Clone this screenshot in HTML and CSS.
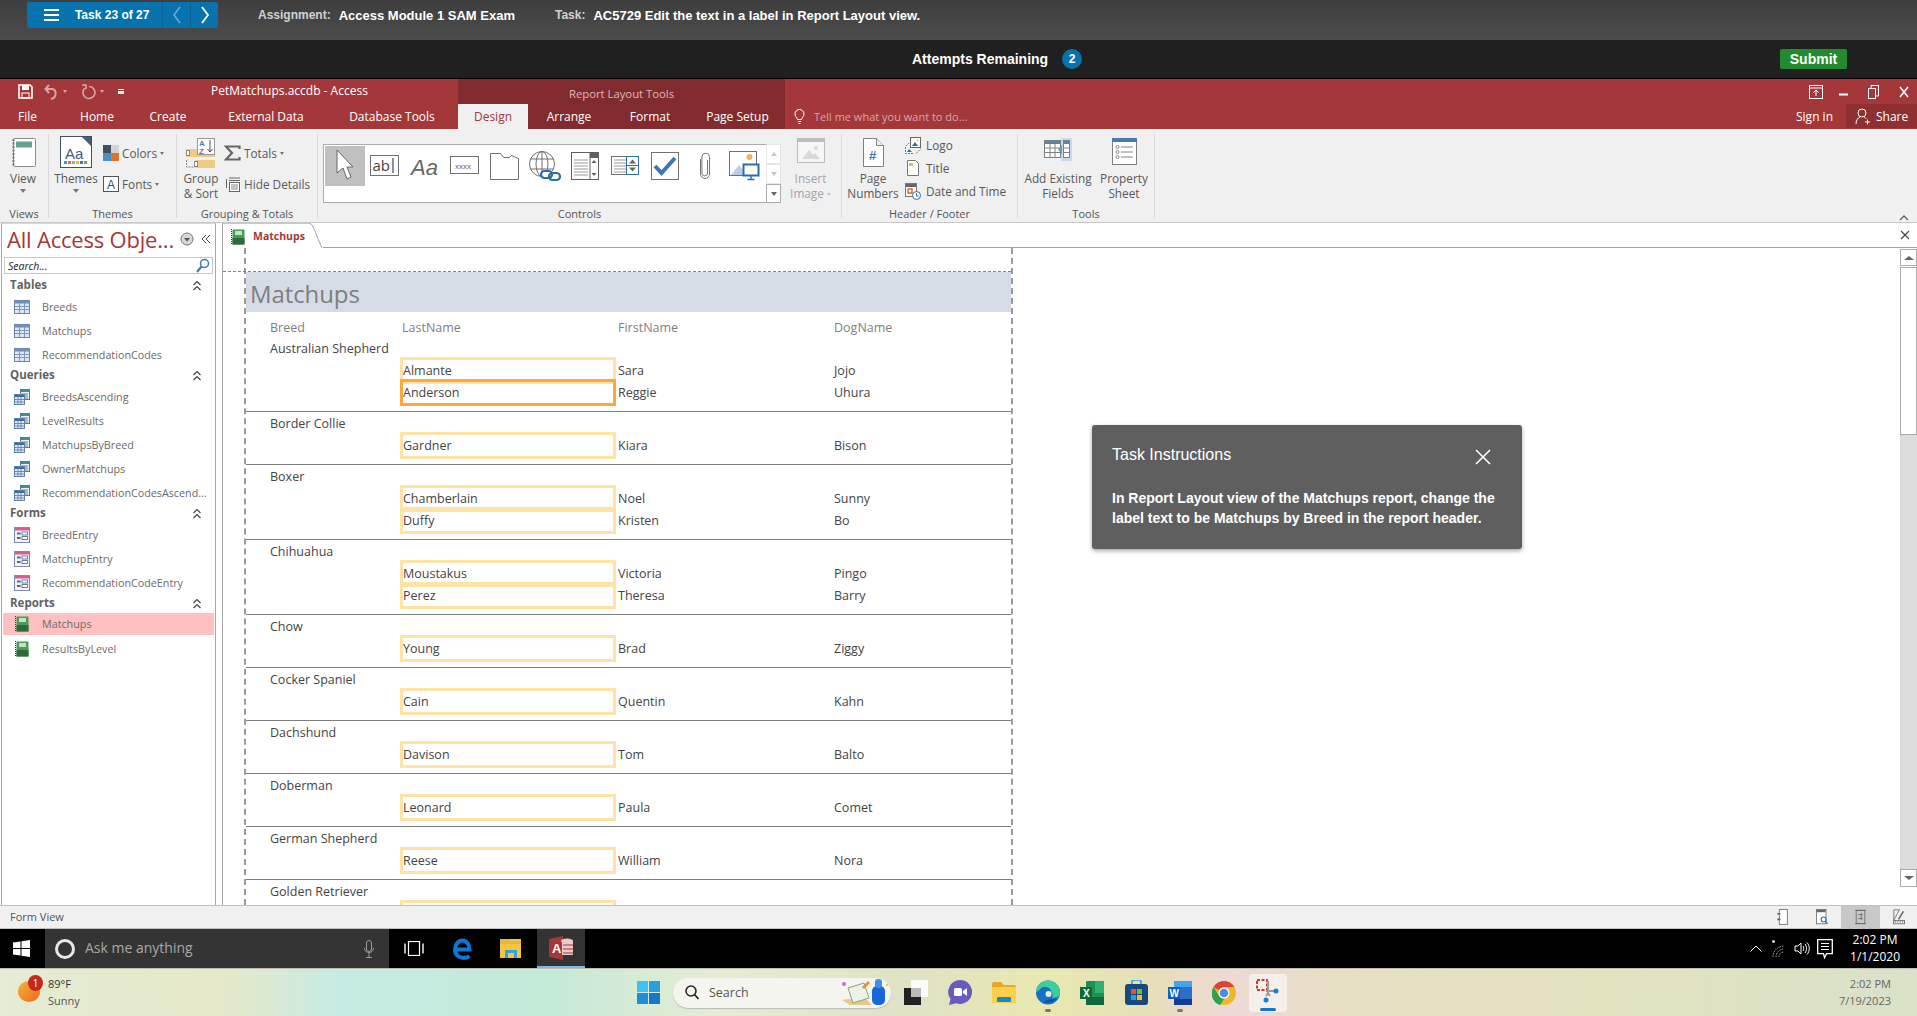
FILE: index.html
```html
<!DOCTYPE html>
<html lang="en">
<head>
<meta charset="utf-8">
<title>Access Module 1 SAM Exam</title>
<link rel="stylesheet" href="styles.css">
</head>
<body>
<svg class="defs" width="0" height="0" aria-hidden="true">
  <symbol id="i-table" viewBox="0 0 16 16"><rect x=".5" y="1.500" width="15" height="13" fill="#dbe7f6" stroke="#6e86a8"/><rect x="1" y="2" width="14" height="2.500" fill="#6f8fbd"/><path d="M1 7.500h14M1 10.500h14M5.500 4v10M10.500 4v10" stroke="#7d97bb" fill="none"/></symbol>
  <symbol id="i-query" viewBox="0 0 16 16"><rect x="6.500" y=".5" width="9" height="10" fill="#e4f0f0" stroke="#4f7f8f"/><rect x="7" y="1" width="8" height="2" fill="#3e8f94"/><path d="M8 5h6M8 7h6M8 9h6" stroke="#5f8aa0"/><rect x=".5" y="5.500" width="10" height="10" fill="#e4ecf6" stroke="#5f7fa8"/><rect x="1" y="6" width="9" height="2" fill="#3e6f94"/><path d="M1 10.500h9M1 13h9M4 8v7M7 8v7" stroke="#6a8ab0"/></symbol>
  <symbol id="i-form" viewBox="0 0 16 16"><rect x=".5" y=".5" width="15" height="15" fill="#f7f1f4" stroke="#7c8cab"/><rect x="1" y="1" width="14" height="2.500" fill="#d0608a"/><rect x="3" y="5.500" width="3.500" height="2" fill="#3c6f9f"/><rect x="3" y="10" width="3.500" height="2" fill="#3c6f9f"/><rect x="8" y="5" width="5.500" height="3" fill="#fff" stroke="#6a7f9f"/><rect x="8" y="9.500" width="5.500" height="3" fill="#fff" stroke="#6a7f9f"/></symbol>
  <symbol id="i-report" viewBox="0 0 14 16"><rect x="1.500" y=".5" width="12" height="15" fill="#4a9a5a"/><rect x="1.500" y="9" width="12" height="6.500" fill="#2d6b3a"/><rect x="4" y="2" width="7" height="4" fill="#c2e6bc"/><path d="M.5 0v16" stroke="#333" stroke-dasharray="1 1"/></symbol>
  <symbol id="i-chev" viewBox="0 0 10 12"><path d="M1.500 5 5 1.500 8.500 5M1.500 10 5 6.500 8.500 10" fill="none" stroke="#444" stroke-width="1.200"/></symbol>
</svg>

<header class="topbar">
  <div class="tasknav">
    <span class="burger"><i></i><i></i><i></i></span>
    <span class="taskcount">Task 23 of 27</span>
    <span class="tn-btn tn-prev"><svg width="10" height="18" viewBox="0 0 10 18"><path d="M8 1 2 9l6 8" fill="none" stroke="#6fa9cf" stroke-width="1.600"/></svg></span>
    <span class="tn-btn tn-next"><svg width="10" height="18" viewBox="0 0 10 18"><path d="M2 1l6 8-6 8" fill="none" stroke="#fff" stroke-width="1.800"/></svg></span>
  </div>
  <span class="meta-k k-assign">Assignment:</span><span class="meta-v v-assign">Access Module 1 SAM Exam</span>
  <span class="meta-k k-task">Task:</span><span class="meta-v">AC5729 Edit the text in a label in Report Layout view.</span>
</header>

<div class="attempts">
  <span class="att-text">Attempts Remaining</span>
  <span class="att-badge">2</span>
  <span class="submit">Submit</span>
</div>

<div class="head">
  <div class="head-left">
    <div class="qat">
      <svg class="q-save" width="15" height="15" viewBox="0 0 15 15"><path d="M1 1h11l2 2v11H1z" fill="none" stroke="#fff" stroke-width="1.600"/><rect x="4" y="1" width="7" height="5" fill="#fff"/><rect x="4" y="9" width="7" height="5" fill="none" stroke="#fff"/></svg>
      <svg class="q-undo" width="15" height="16" viewBox="0 0 15 16"><path d="M5 1 1.500 5 5 9M2 5h6c5 0 5 9-1 10" fill="none" stroke="#d9a6a8" stroke-width="2"/></svg>
      <span class="q-drop"></span>
      <svg class="q-redo" width="15" height="16" viewBox="0 0 15 16"><path d="M8 2.500a6 6 0 1 1-4 1.500M1 1h4v4" fill="none" stroke="#d9a6a8" stroke-width="1.600"/></svg>
      <span class="q-drop"></span>
      <span class="q-cust"></span>
      <span class="doc-title">PetMatchups.accdb - Access</span>
    </div>
    <nav class="tabs tabs-main">
      <span class="tab t-file">File</span><span class="tab t-home">Home</span><span class="tab t-create">Create</span><span class="tab t-ext">External Data</span><span class="tab t-db">Database Tools</span>
    </nav>
  </div>
  <div class="head-ctx">
    <div class="ctx-title">Report Layout Tools</div>
    <nav class="tabs">
      <span class="tab t-design">Design</span><span class="tab t-arr">Arrange</span><span class="tab t-fmt">Format</span><span class="tab t-ps">Page Setup</span>
    </nav>
  </div>
  <div class="head-right">
    <div class="winctl">
      <svg width="14" height="14" viewBox="0 0 14 14"><rect x=".5" y=".5" width="13" height="13" fill="none" stroke="#fff"/><path d="M1 3h12M7 11V5M4.500 7.500 7 5l2.500 2.500" fill="none" stroke="#fff"/></svg>
      <svg class="w-min" width="9" height="14" viewBox="0 0 9 14"><path d="M0 9.500h9" stroke="#fff" stroke-width="2"/></svg>
      <svg class="w-rest" width="11" height="14" viewBox="0 0 11 14"><rect x=".5" y="3.500" width="7" height="10" fill="none" stroke="#fff"/><path d="M3 3V.5h7.500V11H8" fill="none" stroke="#fff"/></svg>
      <svg class="w-x" width="10" height="12" viewBox="0 0 10 12"><path d="M1 1l8 10M9 1 1 11" stroke="#fff" stroke-width="1.600"/></svg>
    </div>
    <div class="tell-row">
      <svg class="bulb" width="11" height="15" viewBox="0 0 11 15"><path d="M3.500 10.500C3 8 1 7.500 1 5a4.500 4.500 0 0 1 9 0c0 2.500-2 3-2.500 5.500zM4 12.500h3M4.500 14.500h2" fill="none" stroke="#fff"/></svg>
      <span class="tell">Tell me what you want to do...</span>
      <span class="signin">Sign in</span>
      <span class="share"><svg width="16" height="17" viewBox="0 0 16 17"><circle cx="7" cy="5" r="4" fill="none" stroke="#fff"/><path d="M1 16c0-4 2-6 4-7M9 9c1 .5 2 1.500 2 2M10 14h5M12.500 11.500v5" fill="none" stroke="#fff"/></svg><span>Share</span></span>
    </div>
  </div>
</div>

<section class="ribbon">
  <div class="grp g-views">
    <div class="grp-body">
      <div class="big b-view">
        <div class="ico"><svg width="25" height="29" viewBox="0 0 25 29"><rect x="2.500" y=".5" width="22" height="28" rx="1" fill="#fff" stroke="#8a8a8a"/><rect x="5" y="3.500" width="16" height="6" fill="#6aa08f"/><path d="M2.500 1v27" stroke="#777" stroke-dasharray="2 1.500" stroke-width="2"/></svg></div>
        <span>View</span><span class="caret"></span>
      </div>
    </div>
    <div class="grp-label">Views</div>
  </div>

  <div class="grp g-themes">
    <div class="grp-body">
      <div class="big b-themes">
        <div class="ico"><svg width="32" height="32" viewBox="0 0 32 32"><rect x=".5" y=".5" width="31" height="31" fill="#fff" stroke="#3f4f66"/><path d="M22 1h9v9z" fill="#4a5a78"/><text x="5" y="23" class="svg-aa">Aa</text><g><rect x="4" y="25" width="3" height="3" fill="#4a90c8"/><rect x="8" y="25" width="3" height="3" fill="#e0732a"/><rect x="12" y="25" width="3" height="3" fill="#a5a5a5"/><rect x="16" y="25" width="3" height="3" fill="#f4b81c"/><rect x="20" y="25" width="3" height="3" fill="#4472c4"/><rect x="24" y="25" width="3" height="3" fill="#6fae45"/></g></svg></div>
        <span>Themes</span><span class="caret"></span>
      </div>
      <div class="smalls s-themes">
        <div class="small"><svg width="16" height="16" viewBox="0 0 16 16"><rect width="8" height="8" fill="#3f4f5f"/><rect x="8" width="8" height="8" fill="#d4d4d4"/><rect y="8" width="8" height="8" fill="#4a90c8"/><rect x="8" y="8" width="8" height="8" fill="#e0732a"/></svg><span>Colors</span><span class="caret-i"></span></div>
        <div class="small"><svg width="16" height="16" viewBox="0 0 16 16"><rect x=".5" y=".5" width="15" height="15" fill="#fff" stroke="#555"/><text x="4" y="13" class="svg-a">A</text></svg><span>Fonts</span><span class="caret-i"></span></div>
      </div>
    </div>
    <div class="grp-label">Themes</div>
  </div>

  <div class="grp g-group">
    <div class="grp-body">
      <div class="big b-group">
        <div class="ico"><svg width="30" height="30" viewBox="0 0 30 30"><rect y="11" width="29" height="8" fill="#f0c987"/><rect x="9" y="22" width="20" height="8" fill="#f0c987"/><rect x=".5" y="12.500" width="3" height="5" fill="#fff" stroke="#888"/><rect x="8.500" y="23.500" width="3" height="5" fill="#fff" stroke="#888"/><path d="M.5 22v7h7" fill="none" stroke="#888" stroke-dasharray="2 1"/><rect x="11.500" y=".5" width="17" height="16" fill="#fff" stroke="#999"/><text x="13" y="8" class="svg-az1">A</text><text x="13" y="15.500" class="svg-az2">Z</text><path d="M24 2v12M21.500 11 24 14l2.500-3" fill="none" stroke="#555"/></svg></div>
        <span>Group</span><span>&amp; Sort</span>
      </div>
      <div class="smalls s-group">
        <div class="small"><svg width="17" height="16" viewBox="0 0 17 16"><path d="M15.500 4V1.500H2L8 8l-6 6.500h13.500V12" fill="none" stroke="#666" stroke-width="2.200"/></svg><span>Totals</span><span class="caret-i"></span></div>
        <div class="small"><svg width="15" height="16" viewBox="0 0 15 16"><path d="M4 2h11M4 4.500h11M1.500 3v9" stroke="#666" fill="none"/><rect x="4.500" y="6.500" width="10" height="9" fill="#fff" stroke="#666"/><path d="M6 9h7M6 11h7M6 13h7" stroke="#888"/></svg><span>Hide Details</span></div>
      </div>
    </div>
    <div class="grp-label">Grouping &amp; Totals</div>
  </div>

  <div class="grp g-controls">
    <div class="grp-body">
      <div class="gallery">
        <div class="gal-items">
          <span class="gal-cell sel"><svg width="18" height="34" viewBox="0 0 18 34"><path d="M1 1v23l6-5 4 11 4-2-4-10h6z" fill="#fff" stroke="#666"/></svg></span>
          <span class="gal-cell"><svg width="30" height="22" viewBox="0 0 30 22"><rect x=".5" y=".5" width="28" height="20" fill="#fff" stroke="#707070"/><text x="2.500" y="16" class="svg-ab">ab</text><path d="M23 3v15" stroke="#222"/></svg></span>
          <span class="gal-cell"><svg width="34" height="26" viewBox="0 0 34 26"><text x="3" y="22" class="svg-big-a">Aa</text></svg></span>
          <span class="gal-cell"><svg width="30" height="20" viewBox="0 0 30 20"><rect x=".5" y=".5" width="28" height="17" fill="#fff" stroke="#707070"/><text x="5" y="12.500" class="svg-x">xxxx</text></svg></span>
          <span class="gal-cell"><svg width="30" height="27" viewBox="0 0 30 27"><path d="M.5 26.500V.5h10l3 4h6l2-2 7 3v21z" fill="#fff" stroke="#707070"/></svg></span>
          <span class="gal-cell"><svg width="34" height="32" viewBox="0 0 34 32"><circle cx="14" cy="14" r="12.500" fill="#fff" stroke="#707070"/><ellipse cx="14" cy="14" rx="6" ry="12.500" fill="none" stroke="#707070"/><path d="M2 9h24M2 19h24M14 1v26" stroke="#707070"/><rect x="13" y="21" width="11" height="7" rx="3.500" fill="#fff" stroke="#2b6da8" stroke-width="2.200"/><rect x="21" y="23" width="11" height="7" rx="3.500" fill="none" stroke="#2b6da8" stroke-width="2.200"/></svg></span>
          <span class="gal-cell"><svg width="28" height="28" viewBox="0 0 28 28"><rect x=".5" y=".5" width="27" height="27" fill="#fff" stroke="#606060"/><rect x="19" y="1" width="8" height="5" fill="#606060"/><path d="M3 8h14M3 11h14M3 14h14M3 17h14M3 20h14M3 23h14" stroke="#999"/><path d="M19 1v26" stroke="#606060"/><path d="M20.500 11h5L23 8zM20.500 21h5L23 24z" fill="#606060"/></svg></span>
          <span class="gal-cell"><svg width="28" height="20" viewBox="0 0 28 20"><rect x=".5" y=".5" width="27" height="18" fill="#fff" stroke="#707070"/><path d="M3 4h12M3 7h12M3 10h12M3 13h12M3 16h12" stroke="#999"/><rect x="15.500" y=".5" width="12" height="18" fill="#fff" stroke="#2b6da8"/><path d="M15.500 9.500h12" stroke="#2b6da8"/><path d="M18 7.500h7L21.500 3.500zM18 11.500h7l-3.500 4z" fill="#666"/></svg></span>
          <span class="gal-cell"><svg width="28" height="28" viewBox="0 0 28 28"><rect x=".5" y=".5" width="27" height="27" fill="#fff" stroke="#707070"/><path d="M4 14l6.500 7L24 6" fill="none" stroke="#3d78b4" stroke-width="4"/></svg></span>
          <span class="gal-cell"><svg width="12" height="28" viewBox="0 0 12 28"><path d="M8.500 8v13a2.800 2.800 0 0 1-5.600 0V5a3.800 3.800 0 0 1 7.600 0v17a4.500 4.500 0 0 1-9 0V7" fill="none" stroke="#777"/></svg></span>
          <span class="gal-cell"><svg width="32" height="30" viewBox="0 0 32 30"><rect x=".5" y=".5" width="27" height="24" fill="#fff" stroke="#707070"/><circle cx="20.500" cy="6" r="3" fill="#eeb55e"/><path d="M2 24l8-10 8 10z" fill="#b9cfe8"/><rect x="14.500" y="13.500" width="15" height="11" fill="#fff" stroke="#2b6da8" stroke-width="2"/><path d="M22 25v3M18.500 28.500h7" stroke="#2b6da8" stroke-width="1.400"/></svg></span>
        </div>
        <div class="gal-scroll">
          <span class="gs-btn"><i class="tri-up"></i></span>
          <span class="gs-btn"><i class="tri-down"></i></span>
          <span class="gs-btn gs-more"><i class="tri-more"></i></span>
        </div>
      </div>
      <div class="big dis b-insert">
        <div class="ico"><svg width="28" height="25" viewBox="0 0 28 25"><rect x=".5" y=".5" width="27" height="24" fill="#f6f6f6" stroke="#bdbdbd"/><rect width="28" height="4" fill="#bdbdbd"/><circle cx="19" cy="10" r="2" fill="#d9d9d9"/><path d="M5 21l7-9 4 5 2-2 5 6z" fill="#d9d9d9"/></svg></div>
        <span>Insert</span><span>Image<i class="caret-i dim"></i></span>
      </div>
    </div>
    <div class="grp-label">Controls</div>
  </div>

  <div class="grp g-header">
    <div class="grp-body">
      <div class="big b-page">
        <div class="ico"><svg width="21" height="29" viewBox="0 0 21 29"><path d="M.5.5h13l7 7v21H.5z" fill="#fff" stroke="#808080"/><path d="M13.500.5v7h7" fill="#eee" stroke="#808080"/><text x="6" y="22" class="svg-hash">#</text></svg></div>
        <span>Page</span><span>Numbers</span>
      </div>
      <div class="smalls s-header">
        <div class="small"><svg width="16" height="17" viewBox="0 0 16 17"><path d="M.5 10v6.500h8M11 16.500l5-5M1 9l3-3" fill="none" stroke="#777" stroke-dasharray="2 1"/><rect x="5.500" y=".5" width="10" height="10" fill="#fff" stroke="#666"/><path d="M7 9l3-4 3 4z" fill="#2b6da8"/><circle cx="12.500" cy="3.500" r="1" fill="#eeb55e"/><path d="M2 15l2-3 3 3z" fill="#2b6da8"/></svg><span>Logo</span></div>
        <div class="small"><svg width="12" height="16" viewBox="0 0 12 16"><path d="M.5.5h8l3 3v12H.5z" fill="#fff" stroke="#777"/><rect x="2" y="3" width="4" height="3" fill="#eeb55e"/></svg><span>Title</span></div>
        <div class="small"><svg width="16" height="17" viewBox="0 0 16 17"><rect x=".5" y=".5" width="11" height="13" fill="#fff" stroke="#777"/><rect x="1" y="1" width="10" height="3" fill="#666"/><rect x="3" y="6" width="4" height="4" fill="none" stroke="#d9622a" stroke-width="1.400"/><circle cx="11.500" cy="12.500" r="4" fill="#fff" stroke="#2b6da8"/><path d="M11.500 10v3h2" fill="none" stroke="#2b6da8"/></svg><span>Date and Time</span></div>
      </div>
    </div>
    <div class="grp-label">Header / Footer</div>
  </div>

  <div class="grp g-tools">
    <div class="grp-body">
      <div class="big b-add">
        <div class="ico"><svg width="29" height="23" viewBox="0 0 29 23"><rect x=".5" y="2.500" width="16" height="17" fill="#fff" stroke="#808080"/><rect x="1" y="3" width="15" height="3" fill="#5c82b0"/><path d="M1 10h15M1 14.500h15M6 6v13M11 6v13" stroke="#808080"/><rect x="17" y="0" width="11" height="23" fill="#c9d9ea"/><rect x="19.500" y="2.500" width="6" height="17" fill="#fff" stroke="#808080"/><rect x="20" y="3" width="5" height="3" fill="#5c82b0"/><path d="M20 10h5M20 14.500h5" stroke="#808080"/><path d="M18 7v9l-4-4.500z" fill="#6aa08f"/></svg></div>
        <span>Add Existing</span><span>Fields</span>
      </div>
      <div class="big b-prop">
        <div class="ico"><svg width="25" height="27" viewBox="0 0 25 27"><rect x=".5" y=".5" width="24" height="26" fill="#fff" stroke="#808080"/><rect width="25" height="4" fill="#4a7ab5"/><path d="M9 9h12M9 14h12M9 19h12" stroke="#808080"/><circle cx="5.500" cy="9" r="1.500" fill="none" stroke="#808080"/><circle cx="5.500" cy="14" r="1.500" fill="none" stroke="#808080"/><circle cx="5.500" cy="19" r="1.500" fill="none" stroke="#808080"/></svg></div>
        <span>Property</span><span>Sheet</span>
      </div>
    </div>
    <div class="grp-label">Tools</div>
  </div>

  <div class="rb-fill"><svg width="10" height="7" viewBox="0 0 10 7"><path d="M1 6l4-4 4 4" fill="none" stroke="#666" stroke-width="1.400"/></svg></div>
</section>

<main class="work">
  <aside class="navpane">
    <div class="nav-head">
      <span class="nav-title">All Access Obje...</span>
      <svg class="nav-drop" width="14" height="14" viewBox="0 0 14 14"><circle cx="7" cy="7" r="6" fill="#d8d8d8" stroke="#777"/><path d="M4 6h6L7 9.500z" fill="#555"/></svg>
      <svg class="nav-coll" width="10" height="10" viewBox="0 0 10 10"><path d="M5 1 1 5l4 4M9 1 5 5l4 4" fill="none" stroke="#444"/></svg>
    </div>
    <div class="nav-search"><span>Search...</span><svg width="14" height="15" viewBox="0 0 14 15"><circle cx="8.500" cy="5.500" r="4" fill="#fff" stroke="#3f78b0" stroke-width="1.500"/><path d="M5.500 8.500 1 14" stroke="#3f78b0" stroke-width="2"/></svg></div>

    <div class="nav-sec"><span>Tables</span><svg width="10" height="12"><use href="#i-chev"/></svg></div>
    <div class="nav-item"><svg class="ni" width="16" height="16"><use href="#i-table"/></svg><span>Breeds</span></div>
    <div class="nav-item"><svg class="ni" width="16" height="16"><use href="#i-table"/></svg><span>Matchups</span></div>
    <div class="nav-item"><svg class="ni" width="16" height="16"><use href="#i-table"/></svg><span>RecommendationCodes</span></div>

    <div class="nav-sec"><span>Queries</span><svg width="10" height="12"><use href="#i-chev"/></svg></div>
    <div class="nav-item"><svg class="ni" width="16" height="16"><use href="#i-query"/></svg><span>BreedsAscending</span></div>
    <div class="nav-item"><svg class="ni" width="16" height="16"><use href="#i-query"/></svg><span>LevelResults</span></div>
    <div class="nav-item"><svg class="ni" width="16" height="16"><use href="#i-query"/></svg><span>MatchupsByBreed</span></div>
    <div class="nav-item"><svg class="ni" width="16" height="16"><use href="#i-query"/></svg><span>OwnerMatchups</span></div>
    <div class="nav-item"><svg class="ni" width="16" height="16"><use href="#i-query"/></svg><span>RecommendationCodesAscend...</span></div>

    <div class="nav-sec"><span>Forms</span><svg width="10" height="12"><use href="#i-chev"/></svg></div>
    <div class="nav-item"><svg class="ni" width="16" height="16"><use href="#i-form"/></svg><span>BreedEntry</span></div>
    <div class="nav-item"><svg class="ni" width="16" height="16"><use href="#i-form"/></svg><span>MatchupEntry</span></div>
    <div class="nav-item"><svg class="ni" width="16" height="16"><use href="#i-form"/></svg><span>RecommendationCodeEntry</span></div>

    <div class="nav-sec"><span>Reports</span><svg width="10" height="12"><use href="#i-chev"/></svg></div>
    <div class="nav-item active"><svg class="ni" width="16" height="16"><use href="#i-report"/></svg><span>Matchups</span></div>
    <div class="nav-item"><svg class="ni" width="16" height="16"><use href="#i-report"/></svg><span>ResultsByLevel</span></div>
  </aside>

  <section class="doc">
    <div class="doc-tabs">
      <div class="doc-tab"><svg width="16" height="16"><use href="#i-report"/></svg><span>Matchups</span></div>
      <svg class="doc-slope" width="14" height="25" viewBox="0 0 14 25"><path d="M0 .5c5 0 5 8 13 24" fill="none" stroke="#a0a0a0"/></svg>
      <div class="doc-line"><svg width="10" height="10" viewBox="0 0 10 10"><path d="M1 1l8 8M9 1 1 9" stroke="#444" stroke-width="1.200"/></svg></div>
    </div>
    <div class="doc-body">
      <div class="canvas">
        <div class="report">
          <div class="rep-top"></div>
          <div class="rep-band"><span>Matchups</span></div>
          <div class="rec rep-cols"><span>Breed</span><span>LastName</span><span>FirstName</span><span>DogName</span></div>

          <div class="grpx first">
            <div class="breed">Australian Shepherd</div>
            <div class="rec"><span></span><span class="ln">Almante</span><span>Sara</span><span>Jojo</span></div>
            <div class="rec"><span></span><span class="ln cur">Anderson</span><span>Reggie</span><span>Uhura</span></div>
          </div>
          <div class="grpx">
            <div class="breed">Border Collie</div>
            <div class="rec"><span></span><span class="ln">Gardner</span><span>Kiara</span><span>Bison</span></div>
          </div>
          <div class="grpx">
            <div class="breed">Boxer</div>
            <div class="rec"><span></span><span class="ln">Chamberlain</span><span>Noel</span><span>Sunny</span></div>
            <div class="rec"><span></span><span class="ln">Duffy</span><span>Kristen</span><span>Bo</span></div>
          </div>
          <div class="grpx">
            <div class="breed">Chihuahua</div>
            <div class="rec"><span></span><span class="ln">Moustakus</span><span>Victoria</span><span>Pingo</span></div>
            <div class="rec"><span></span><span class="ln">Perez</span><span>Theresa</span><span>Barry</span></div>
          </div>
          <div class="grpx">
            <div class="breed">Chow</div>
            <div class="rec"><span></span><span class="ln">Young</span><span>Brad</span><span>Ziggy</span></div>
          </div>
          <div class="grpx">
            <div class="breed">Cocker Spaniel</div>
            <div class="rec"><span></span><span class="ln">Cain</span><span>Quentin</span><span>Kahn</span></div>
          </div>
          <div class="grpx">
            <div class="breed">Dachshund</div>
            <div class="rec"><span></span><span class="ln">Davison</span><span>Tom</span><span>Balto</span></div>
          </div>
          <div class="grpx">
            <div class="breed">Doberman</div>
            <div class="rec"><span></span><span class="ln">Leonard</span><span>Paula</span><span>Comet</span></div>
          </div>
          <div class="grpx">
            <div class="breed">German Shepherd</div>
            <div class="rec"><span></span><span class="ln">Reese</span><span>William</span><span>Nora</span></div>
          </div>
          <div class="grpx">
            <div class="breed">Golden Retriever</div>
            <div class="rec"><span></span><span class="ln"></span><span></span><span></span></div>
          </div>
        </div>
      </div>
      <div class="vscroll">
        <span class="vs-btn"><i class="tri-up dark"></i></span>
        <span class="vs-thumb"></span>
        <span class="vs-track"></span>
        <span class="vs-btn down"><i class="tri-down dark"></i></span>
        <span class="vs-end"></span>
      </div>
    </div>
  </section>
</main>

<footer class="status">
  <span>Form View</span>
  <div class="views">
    <span class="vw"><svg width="11" height="16" viewBox="0 0 13 20"><rect x="2.500" y=".5" width="10" height="19" fill="#fff" stroke="#666"/><path d="M0 6h4M0 13h4" stroke="#666" stroke-width="2"/></svg></span>
    <span class="vw"><svg width="12" height="16" viewBox="0 0 15 20"><rect x=".5" y=".5" width="12" height="18" fill="#fff" stroke="#666"/><rect x="1" y="1" width="11" height="3" fill="#666"/><circle cx="9.500" cy="13" r="3" fill="#fff" stroke="#2b6da8" stroke-width="1.400"/><path d="M12 15.500l2.500 3" stroke="#2b6da8" stroke-width="1.400"/></svg></span>
    <span class="vw on"><svg width="11" height="16" viewBox="0 0 14 20"><rect x="1.500" y="1.500" width="11" height="17" fill="none" stroke="#666"/><path d="M0 1.500h14M0 18.500h14M4 7h6M4 12h6M8 5v9" stroke="#666"/></svg></span>
    <span class="vw last"><svg width="12" height="16" viewBox="0 0 15 20"><path d="M1 1v13l7-13z" fill="none" stroke="#666"/><path d="M7 13l6-10" stroke="#666" stroke-width="2"/><rect x=".5" y="14.500" width="14" height="4" fill="none" stroke="#666"/><path d="M3 15v2M6 15v2M9 15v2M12 15v2" stroke="#666"/></svg></span>
  </div>
</footer>

<div class="win10">
  <span class="w10-start"><svg width="17" height="17" viewBox="0 0 17 17"><path d="M0 2.500 7.500 1.400v6.600H0zM8.500 1.300 17 0v8H8.500zM0 9h7.500v6.600L0 14.500zM8.500 9H17v8l-8.500-1.300z" fill="#fff"/></svg></span>
  <div class="w10-search">
    <span class="ring"></span>
    <span class="ask">Ask me anything</span>
    <svg width="10" height="18" viewBox="0 0 10 18"><rect x="2.500" y=".5" width="5" height="11" rx="2.500" fill="none" stroke="#999"/><path d="M.5 8c0 6 9 6 9 0M5 13v4M2 17.500h6" fill="none" stroke="#999"/></svg>
  </div>
  <span class="w10-app a-view"><svg width="20" height="15" viewBox="0 0 20 15"><rect x="4.500" y=".5" width="11" height="14" fill="none" stroke="#fff" stroke-width="1.200"/><path d="M1 2.500v10M19 2.500v10" stroke="#fff" stroke-width="1.400"/></svg></span>
  <span class="w10-app a-edge"><svg width="20" height="22" viewBox="0 0 20 22"><path d="M3.500 11.500h13c0-5-3-9-7-9S2 6.500 2 11.500 6 20 10.500 20c2.500 0 4.500-.7 6-1.800" fill="none" stroke="#0a78d7" stroke-width="4"/></svg></span>
  <span class="w10-app a-files"><svg width="22" height="19" viewBox="0 0 22 19"><path d="M0 0h21v19H0z" fill="#f4c542"/><path d="M0 0h9l2 2h10v3H0z" fill="#e8b83a"/><path d="M5 19v-8h12v8z" fill="#2ea3dc"/><rect x="8" y="14" width="6" height="5" fill="#f4c542"/></svg></span>
  <span class="w10-app a-access"><svg width="24" height="24" viewBox="0 0 24 24"><path d="M0 3 14 0v24L0 21z" fill="#a4373a"/><ellipse cx="18" cy="5" rx="6" ry="2.500" fill="#e9c9ca"/><path d="M13 5h11v14H13z" fill="#e9c9ca"/><path d="M14 9h10M14 13h10M14 17h10" stroke="#a4373a"/><text x="3" y="17" class="svg-acc">A</text></svg></span>
  <div class="tray">
    <svg width="12" height="7" viewBox="0 0 12 7"><path d="M.5 6.500 6 1l5.500 5.500" fill="none" stroke="#fff"/></svg>
    <svg class="tray-net" width="14" height="19" viewBox="0 0 14 19"><path d="M2 18a11 11 0 0 1 11-11M5 18a8 8 0 0 1 8-8M8 18a5 5 0 0 1 5-5" fill="none" stroke="#aaa" stroke-dasharray="1.500 1"/><path d="M1 2.500h3M2.500 1v3M1.300 1.300l2.400 2.400M3.700 1.300 1.300 3.700" stroke="#fff" stroke-width=".7"/></svg>
    <svg width="16" height="15" viewBox="0 0 16 15"><path d="M1 5h3l3-3v11l-3-3H1z" fill="none" stroke="#fff"/><path d="M9 5c1 1.500 1 3.500 0 5M11 3c2 2.500 2 6.500 0 9M13 1.500c3 3.500 3 8.500 0 12" fill="none" stroke="#fff"/></svg>
    <svg width="16" height="20" viewBox="0 0 16 20"><path d="M.7.7h14.600v14H9.500l-2 4-1-4H.7z" fill="none" stroke="#fff" stroke-width="1.300"/><path d="M4 4.500h8M4 7.500h8M4 10.500h8" stroke="#fff"/></svg>
    <div class="clock"><span>2:02 PM</span><span>1/1/2020</span></div>
  </div>
</div>

<div class="win11">
  <div class="weather">
    <span class="sun"><span class="sun-badge">1</span></span>
    <div class="wtext"><span>89°F</span><span class="dim-t">Sunny</span></div>
  </div>
  <div class="w11-center">
    <svg class="w11-logo" width="23" height="23" viewBox="0 0 23 23"><rect width="11" height="11" fill="#40c0f0"/><rect x="12" width="11" height="11" fill="#2a9fe0"/><rect y="12" width="11" height="11" fill="#1f8fd8"/><rect x="12" y="12" width="11" height="11" fill="#1478c8"/></svg>
    <div class="w11-search">
      <svg width="14" height="15" viewBox="0 0 14 15"><circle cx="6" cy="6" r="5" fill="none" stroke="#222" stroke-width="1.500"/><path d="M9.500 9.500 13.500 14" stroke="#222" stroke-width="1.700"/></svg>
      <span>Search</span>
      <svg class="doodle" width="48" height="28" viewBox="0 0 48 28"><path d="M2 21l22-3 8 8H10z" fill="#e6c98a"/><path d="M8 9l16-5 5 15-16 5z" fill="#eef2e6" stroke="#8aa37a"/><path d="M22 8l6-6 2 2-6 6z" fill="#f08a3c"/><rect x="32" y="7" width="13" height="19" rx="5" fill="#1668d8"/><rect x="35" y="0" width="7" height="9" rx="3" fill="#3f8fef"/><circle cx="4" cy="5" r="2" fill="#d060e0"/><circle cx="47" cy="6" r="1" fill="#f0b030"/></svg>
    </div>
    <span class="ti t-task"><svg width="24" height="25" viewBox="0 0 24 25"><rect x="7" y="0" width="17" height="17" fill="#fff" opacity=".9"/><rect y="8" width="17" height="17" fill="#222"/><rect x="7" y="8" width="10" height="9" fill="#bbb"/></svg></span>
    <span class="ti t-chat"><svg width="24" height="25" viewBox="0 0 24 25"><path d="M12 0a12 12 0 1 1-4 23.300L1 25l1.500-6A12 12 0 0 1 12 0z" fill="#6a5ac0"/><rect x="6" y="8" width="8" height="8" rx="1.500" fill="#fff"/><path d="M15 11l4-3v8l-4-3z" fill="#fff"/></svg></span>
    <span class="ti t-folder"><svg width="24" height="21" viewBox="0 0 24 21"><path d="M0 2a2 2 0 0 1 2-2h7l3 3h10a2 2 0 0 1 2 2v16H0z" fill="#e8a825"/><path d="M0 5h24v16H0z" fill="#fad04a"/><rect x="5" y="15" width="14" height="5" rx="1" fill="#1a86d0"/></svg></span>
    <span class="ti t-edge dot"><svg width="24" height="25" viewBox="0 0 24 25"><circle cx="12" cy="12.500" r="12" fill="#1670c8"/><path d="M12 .5a12 12 0 0 1 12 12c0 3-2 5-5 5h-3.500c1.500-1 1.500-3.500 0-5A6.500 6.500 0 0 0 3.500 10 12 12 0 0 0 0 12.500 12 12 0 0 1 12 .5z" fill="#3ccf9e"/><circle cx="12.500" cy="14" r="3" fill="#e8eed0"/><path d="M8 22c3 1 8 1 12-3-3 0-8 0-12 3z" fill="#0d4f9e"/></svg></span>
    <span class="ti t-xl"><svg width="24" height="24" viewBox="0 0 24 24"><rect x="6" width="18" height="24" rx="1" fill="#1f8f58"/><rect x="15" width="9" height="12" fill="#2fb070"/><rect x="6" y="16" width="18" height="8" fill="#106a3c"/><rect y="6" width="12" height="12" fill="#0f6a3a"/><text x="3" y="16" class="svg-xl">X</text></svg></span>
    <span class="ti t-store"><svg width="23" height="25" viewBox="0 0 23 25"><path d="M7 5V2a2 2 0 0 1 2-2h5a2 2 0 0 1 2 2v3" fill="none" stroke="#30a0e0" stroke-width="1.600"/><rect y="4" width="23" height="21" rx="3" fill="#17497f"/><rect x="6" y="9" width="5" height="5" fill="#e8532a"/><rect x="12" y="9" width="5" height="5" fill="#6dbf3c"/><rect x="6" y="15" width="5" height="5" fill="#20a0e8"/><rect x="12" y="15" width="5" height="5" fill="#f8bc1c"/></svg></span>
    <span class="ti t-word dot"><svg width="24" height="24" viewBox="0 0 24 24"><rect x="6" width="18" height="24" rx="1" fill="#2a6fc8"/><rect x="6" width="18" height="6" fill="#41a5ee"/><rect x="6" y="18" width="18" height="6" fill="#103f91"/><rect y="6" width="12" height="12" fill="#185abd"/><text x="1.500" y="16" class="svg-xl">W</text></svg></span>
    <span class="ti t-chrome"><svg width="24" height="24" viewBox="0 0 24 24"><circle cx="12" cy="12" r="12" fill="#e9b92c"/><path d="M12 0a12 12 0 0 1 10.400 6H12a6 6 0 0 0-5.200 3L1.600 6A12 12 0 0 1 12 0z" fill="#dc4437"/><path d="M1.600 6 7 15a6 6 0 0 0 5 3l-4 6A12 12 0 0 1 1.600 6z" fill="#2ea24c"/><circle cx="12" cy="12" r="5.500" fill="#fff"/><circle cx="12" cy="12" r="4.300" fill="#4a8bf0"/></svg></span>
    <span class="ti t-snip"><svg width="24" height="28" viewBox="0 0 24 28"><rect x="1" y="1" width="10" height="10" fill="none" stroke="#d0392a" stroke-width="2" stroke-dasharray="3 1.500"/><path d="M12 2v12l-2 3M12 14l2 3M10 12h12" stroke="#999" stroke-width="2" fill="none"/><circle cx="20" cy="12" r="2.500" fill="#1080d8"/><circle cx="10" cy="21" r="2.500" fill="#1080d8"/></svg></span>
  </div>
  <div class="w11-clock"><span>2:02 PM</span><span>7/19/2023</span></div>
</div>

<aside class="instructions">
  <div class="ins-head"><span>Task Instructions</span><svg width="16" height="16" viewBox="0 0 16 16"><path d="M1 1l14 14M15 1 1 15" stroke="#fff" stroke-width="1.600"/></svg></div>
  <p>In Report Layout view of the Matchups report, change the label text to be Matchups by Breed in the report header.</p>
</aside>
</body>
</html>
```
FILE: styles.css
```css
* { box-sizing: border-box; }
html, body { margin: 0; padding: 0; }
body {
  width: 1917px; height: 1016px; overflow: hidden; position: relative;
  display: flex; flex-direction: column;
  font-family: "Open Sans", "Noto Sans", sans-serif; font-size: 12px; color: #444; background: #fff;
}
.defs { position: absolute; }
svg { display: block; flex: none; }
i { font-style: normal; }

/* SAM top bars */
.topbar {
  height: 40px; display: flex; align-items: center; padding-left: 27px;
  background: linear-gradient(#3e3e3e, #4c4c4c);
  font-family: "Liberation Sans", Arial, sans-serif; font-weight: 700; font-size: 13px; color: #fff;
}
.tasknav {
  width: 191px; height: 26px; margin-top: -10px; display: flex; align-items: center;
  background: #0672ae; border-radius: 2px; font-size: 12px;
}
.burger { width: 15px; margin-left: 17px; display: flex; flex-direction: column; gap: 3px; }
.burger i { height: 2px; background: #fff; }
.taskcount { margin-left: 16px; width: 88px; }
.tn-btn { width: 28px; height: 26px; display: flex; align-items: center; justify-content: center; border-left: 1px solid #0a6396; }
.meta-k { color: #cfd2d4; margin-top: -10px; font-size: 12px; }
.meta-v { margin-top: -10px; }
.k-assign { margin-left: 40px; }
.v-assign { margin-left: 8px; }
.k-task { margin-left: 40px; }
.k-task + .meta-v { margin-left: 8px; }

.attempts {
  height: 39px; display: flex; align-items: center; position: relative;
  background: #202020; border-bottom: 1px solid #000;
  font-family: "Liberation Sans", Arial, sans-serif; font-weight: 700; color: #fff; font-size: 14px;
  padding-left: 912px;
}
.att-text { width: 150px; }
.att-badge { width: 20px; height: 20px; border-radius: 50%; background: #0672ae; display: flex; align-items: center; justify-content: center; font-size: 12px; }
.submit { margin-left: 698px; width: 67px; height: 20px; background: #228b2e; border-radius: 2px; display: flex; align-items: center; justify-content: center; font-size: 14px; }

/* Access title + tabs */
.head { height: 50px; display: flex; background: #a4373a; color: #fff; }
.head-left { width: 458px; }
.head-ctx { width: 327px; background: #812b2e; }
.head-right { flex: 1; }
.qat { height: 25px; display: flex; align-items: center; padding-left: 18px; }
.q-undo { margin-left: 11px; }
.q-redo { margin-left: 14px; }
.q-drop { margin-left: 4px; width: 0; height: 0; border: 2.5px solid transparent; border-top: 3px solid #d9a6a8; border-bottom: 0; }
.q-cust { margin-left: 14px; width: 6px; height: 5px; border-top: 1px solid #fff; border-bottom: 3px solid #fff; }
.doc-title { margin-left: 87px; margin-top: -2px; font-size: 12px; }
.tabs { height: 25px; display: flex; }
.tabs-main { padding-right: 9px; }
.tab { display: flex; align-items: center; justify-content: center; font-size: 12px; padding-bottom: 1px; }
.t-file { width: 55px; } .t-home { width: 84px; } .t-create { width: 58px; } .t-ext { width: 138px; } .t-db { width: 114px; }
.t-design { width: 70px; background: #f0f0f0; color: #a4373a; }
.t-arr { width: 82px; } .t-fmt { width: 80px; } .t-ps { width: 95px; }
.ctx-title { height: 25px; padding-top: 7px; line-height: 16px; text-align: center; color: #dcb8b9; font-size: 11.3px; }
.winctl { height: 25px; display: flex; align-items: center; padding-left: 1024px; }
.w-min { margin-left: 16px; }
.w-rest { margin-left: 20px; }
.w-x { margin-left: 20px; }
.tell-row { height: 25px; display: flex; align-items: center; padding-left: 9px; }
.tell { margin-left: 9px; width: 982px; color: #d7a5a7; font-size: 11px; }
.signin { width: 50px; font-size: 12px; }
.share { width: 71px; height: 24px; margin-bottom: 1px; background: #8e2f32; display: flex; align-items: center; gap: 5px; padding-left: 9px; font-size: 12px; }

/* Ribbon */
.ribbon { height: 94px; display: flex; padding-top: 5px; background: #f0f0f0; border-bottom: 1px solid #c8c8c8; }
.grp { height: 84px; display: flex; flex-direction: column; border-right: 1px solid #d9d9d9; flex: none; }
.g-views { width: 49px; } .g-themes { width: 128px; } .g-group { width: 141px; }
.g-controls { width: 524px; } .g-header { width: 176px; } .g-tools { width: 137px; }
.grp-body { height: 73px; display: flex; }
.grp-label { height: 11px; line-height: 14px; text-align: center; font-size: 11px; color: #555; white-space: nowrap; }
.rb-fill { flex: 1; height: 88px; display: flex; align-items: flex-end; justify-content: flex-end; padding: 0 8px 1px 0; }
.big { display: flex; flex-direction: column; align-items: center; line-height: 15px; color: #595959; font-size: 11.8px; white-space: nowrap; }
.big .ico { height: 37px; width: 100%; padding-top: 4px; display: flex; justify-content: center; }
.big.dis { color: #a3a3ad; }
.caret { width: 0; height: 0; margin-top: 3px; border: 3px solid transparent; border-top: 4px solid #777; border-bottom: 0; }
.caret-i { display: inline-block; width: 0; height: 0; margin-left: 3px; border: 2.5px solid transparent; border-top: 3px solid #777; border-bottom: 0; vertical-align: 2px; }
.caret-i.dim { border-top-color: #c0c0c0; }
.b-view { width: 46px; }
.b-themes { width: 46px; margin-left: 4px; }
.b-themes .ico { padding-top: 2px; }
.b-group { width: 40px; margin-left: 4px; }
.b-insert { width: 59px; }
.b-page { width: 58px; margin-left: 2px; }
.b-add { width: 76px; margin-left: 2px; }
.b-prop { width: 48px; margin-left: 4px; }
.smalls { display: flex; flex-direction: column; }
.small { height: 20px; display: flex; align-items: center; color: #595959; font-size: 11.8px; white-space: nowrap; }
.s-themes { margin: 9px 0 0 4px; gap: 11px; }
.s-themes .small span:first-of-type { margin-left: 3px; }
.s-group { margin: 9px 0 0 3px; gap: 11px; }
.s-group .small svg { width: 17px; }
.s-group .small span:first-of-type { margin-left: 3px; }
.s-header { margin: 1px 0 0 3px; gap: 3px; }
.s-header .small svg { margin-right: 5px; }
.s-header .small:nth-child(2) svg { margin: 0 7px 0 2px; }

.gallery { width: 458px; height: 59px; margin: 10px 0 0 5px; display: flex; background: #fff; border: 1px solid #ababab; }
.gal-items { flex: 1; display: flex; padding: 1px 0 0 1px; }
.gal-cell { width: 40px; height: 40px; display: flex; align-items: center; justify-content: center; }
.gal-cell.sel { background: #c0c0c0; }
.gal-scroll { width: 15px; display: flex; flex-direction: column; margin: -1px -1px -1px 0; }
.gs-btn { height: 20px; display: flex; align-items: center; justify-content: center; background: #fff; border: 1px solid #e6e6e6; }
.gs-more { border-color: #ababab; flex: 1; }
.tri-up, .tri-down, .tri-more { width: 0; height: 0; border: 3.5px solid transparent; }
.tri-up { border-top: 0; border-bottom: 4px solid #c6c6c6; }
.tri-down { border-bottom: 0; border-top: 4px solid #c6c6c6; }
.tri-more { border-bottom: 0; border-top: 4px solid #666; box-shadow: 0 -3px 0 -2px #666; }
.tri-up.dark { border-bottom-color: #666; border-left-width: 5px; border-right-width: 5px; }
.tri-down.dark { border-top-color: #666; border-left-width: 5px; border-right-width: 5px; }

/* svg text */
.svg-aa { font: 15px "Liberation Sans", sans-serif; fill: #3d5a80; }
.svg-a { font: 12px "Liberation Sans", sans-serif; fill: #2b4b80; }
.svg-az1 { font: bold 8px "Liberation Sans", sans-serif; fill: #3b7fc4; }
.svg-az2 { font: bold 8px "Liberation Sans", sans-serif; fill: #8a5fb0; }
.svg-ab { font: 15px "Open Sans", sans-serif; fill: #444; }
.svg-big-a { font: italic 22px "Liberation Sans", sans-serif; fill: #666; }
.svg-x { font: 8px "Liberation Sans", sans-serif; fill: #666; }
.svg-hash { font: bold 13px "Liberation Sans", sans-serif; fill: #3d78b4; }
.svg-acc { font: bold 13px "Liberation Sans", sans-serif; fill: #fff; }
.svg-xl { font: bold 10px "Liberation Sans", sans-serif; fill: #fff; }

/* Work area */
.work { height: 682px; display: flex; overflow: hidden; }
.navpane { width: 215px; margin-left: 1px; border-left: 1px solid #a8a8a8; border-right: 1px solid #a8a8a8; border-top: 1px solid #d8d8d8; flex: none; }
.nav-head { height: 33px; display: flex; align-items: center; padding: 0 0 4px 5px; }
.nav-title { width: 173px; font-size: 22px; line-height: 30px; color: #a4373a; white-space: nowrap; letter-spacing: -.2px; }
.nav-coll { margin-left: 7px; }
.nav-search { height: 17px; margin: 0 2px 0 2px; display: flex; align-items: center; border: 1px solid #c8c8c8; font-style: italic; font-size: 10.5px; color: #222; padding-left: 3px; }
.nav-search span { flex: 1; }
.nav-search svg { margin-right: 2px; }
.nav-sec { height: 18px; line-height: 17px; display: flex; justify-content: space-between; align-items: flex-start; padding: 0 13px 0 8px; font-weight: 700; font-size: 11.5px; color: #626262; }
.nav-sec svg { margin-top: 4px; }
.nav-search + .nav-sec { margin-top: 2px; }
.nav-item { height: 24px; display: flex; align-items: center; padding: 2px 0 0 12px; font-size: 10.75px; color: #6a6a6a; white-space: nowrap; }
.nav-item span { margin-left: 12px; }
.nav-item.active { height: 22px; margin: 1px 1px 1px 1px; padding: 0 0 0 11px; background: #ffc0c2; }

.doc { flex: 1; margin-left: 6px; border-left: 1px solid #a8a8a8; display: flex; flex-direction: column; min-width: 0; }
.doc-tabs { height: 25px; display: flex; flex: none; }
.doc-tab { width: 86px; display: flex; align-items: flex-start; padding: 5px 0 0 7px; gap: 7px; border-top: 1px solid #c8c8c8; font-size: 10.5px; font-weight: 700; color: #a4373a; }
.doc-tab span { line-height: 15px; }
.doc-line { flex: 1; border-bottom: 1px solid #a0a0a0; display: flex; justify-content: flex-end; align-items: center; padding: 0 7px 0 0; }
.doc-body { flex: 1; display: flex; min-height: 0; }
.canvas { flex: 1; overflow: hidden; padding-left: 21px; }
.report { width: 769px; height: 100%; border-left: 2px dashed #9a9a9a; border-right: 2px dashed #9a9a9a; font-size: 12.5px; color: #444; }
.rep-top { height: 24px; margin-left: -23px; border-bottom: 1px dashed #808080; }
.rep-band { height: 40px; background: #d6dce5; padding: 4px 0 0 4px; font-size: 24px; line-height: 36px; color: #7f7f7f; letter-spacing: -.1px; }
.rec { display: grid; grid-template-columns: 130px 218px 216px 1fr; height: 22px; padding-left: 24px; line-height: 22px; white-space: nowrap; }
.rep-cols { height: 25px; line-height: 32px; color: #7f7f7f; }
.rep-cols span:nth-child(2) { padding-left: 2px; }
.breed { height: 20px; line-height: 23px; padding-left: 24px; }
.grpx { border-top: 1px solid #808080; padding-bottom: 10px; }
.grpx.first { border-top: 0; }
.ln { height: 27px; border: 3px solid #ffe3a4; line-height: 22px; margin-right: 2px; }
.ln.cur { border-color: #ffa63c; }
.rec span:nth-child(3), .rec span:nth-child(4) { line-height: 27px; }
.rep-cols span:nth-child(3), .rep-cols span:nth-child(4) { line-height: 32px; }
.vscroll { width: 17px; display: flex; flex-direction: column; flex: none; }
.vs-btn { height: 17px; margin-top: 1px; display: flex; align-items: center; justify-content: center; background: #fff; border: 1px solid #ababab; }
.vs-btn.down { margin-top: 0; height: 18px; }
.vs-thumb { height: 168px; margin-top: 1px; background: #fff; border: 1px solid #ababab; }
.vs-track { flex: 1; background: #dcdcdc; }
.vs-end { height: 18px; }

.status { height: 24px; display: flex; align-items: center; justify-content: space-between; padding: 0 0 1px 10px; background: #f0f0f0; border-top: 1px solid #c0c0c0; border-bottom: 1px solid #c0c0c0; font-size: 11px; color: #555; }
.views { display: flex; height: 22px; }
.vw { width: 39px; display: flex; align-items: center; justify-content: center; }
.vw.last { width: 37px; }
.vw.on { background: #c8c8c8; }

/* Windows 10 taskbar */
.win10 { height: 39px; display: flex; background: #000; align-items: stretch; color: #fff; }
.w10-start { width: 45px; display: flex; align-items: center; padding-left: 13px; }
.w10-search { width: 344px; display: flex; align-items: center; background: #343434; padding-left: 10px; }
.ring { width: 20px; height: 20px; border-radius: 50%; border: 3px solid #e8e8e8; }
.ask { margin: -2px 0 0 10px; width: 279px; color: #a8a8a8; font-size: 14px; }
.w10-app { display: flex; align-items: center; justify-content: center; }
.a-view { width: 50px; }
.a-edge { width: 48px; }
.a-files { width: 48px; padding-bottom: 1px; }
.a-access { width: 48px; margin-left: 2px; background: #333; border-bottom: 2px solid #76b9ed; }
.tray { margin-left: auto; display: flex; align-items: center; padding-right: 17px; color: #fff; }
.tray-net { margin: 0 9px 0 9px; }
.tray svg:nth-child(4) { margin-left: 7px; }
.clock { margin-left: 17px; padding-bottom: 2px; display: flex; flex-direction: column; align-items: center; font-size: 12px; line-height: 17px; }

/* Windows 11 taskbar */
.win11 {
  flex: 1; display: flex; align-items: center; border-top: 1px solid #bdbdb0;
  background: linear-gradient(90deg, #e4ecd4 0, #e6e8c8 220px, #c6ebe4 340px, #c4ead8 550px, #e6ecd2 720px, #e0e2c6 900px, #e9e8b0 1050px, #e6dfb8 1150px, #efd9d6 1230px, #e8dfc4 1330px, #e3e3c0 1600px, #d9e1c8 1917px);
  color: #333;
}
.weather { width: 637px; display: flex; align-items: center; padding-left: 18px; flex: none; }
.sun { width: 22px; height: 21px; margin-top: -3px; position: relative; border-radius: 50%; background: linear-gradient(135deg, #f9b13c, #ea6a1c); }
.sun-badge { position: absolute; left: 10px; top: -6px; width: 15px; height: 16px; border-radius: 50%; background: #c6281e; color: #fff; font-size: 10px; line-height: 16px; text-align: center; }
.wtext { margin: -2px 0 0 8px; display: flex; flex-direction: column; font-size: 11px; line-height: 17px; }
.dim-t { color: #555; }
.w11-center { display: flex; align-items: center; flex: none; }
.w11-search { width: 218px; height: 30px; margin-left: 13px; display: flex; align-items: center; padding-left: 12px; background: #f5f5ef; border-radius: 15px; box-shadow: 0 1px 1px #bbb; font-size: 12.5px; color: #555; }
.w11-search span { margin-left: 10px; flex: 1; }
.doodle { margin-right: 3px; }
.ti { width: 24px; margin-left: 20px; display: flex; justify-content: center; position: relative; }
.ti.t-task { margin-left: 13px; }
.ti.t-snip { margin-left: 13px; width: 38px; height: 38px; background: #f4efea; border-radius: 4px; padding-top: 5px; }
.t-snip::after { content: ""; position: absolute; left: 11px; bottom: 1px; width: 16px; height: 3px; border-radius: 2px; background: #0f78d4; }
.dot::after { content: ""; position: absolute; left: 9px; bottom: -7px; width: 6px; height: 3px; border-radius: 2px; background: #777; }
.w11-clock { margin-left: auto; padding: 0 26px 2px 0; display: flex; flex-direction: column; align-items: flex-end; font-size: 11px; line-height: 17px; color: #666; }

/* Floating instructions */
.instructions {
  position: absolute; left: 1092px; top: 425px; width: 430px; height: 124px;
  padding: 17px 20px 0; background: #5f5f5f; border-radius: 3px; box-shadow: 0 2px 4px rgba(0,0,0,.35);
  font-family: "Liberation Sans", Arial, sans-serif; color: #fff;
}
.ins-head { display: flex; justify-content: space-between; align-items: flex-start; font-size: 16px; line-height: 26px; }
.ins-head svg { margin: 7px 11px 0 0; }
.instructions p { margin: 20px 0 0; font-size: 14px; font-weight: 700; line-height: 20px; }
```
